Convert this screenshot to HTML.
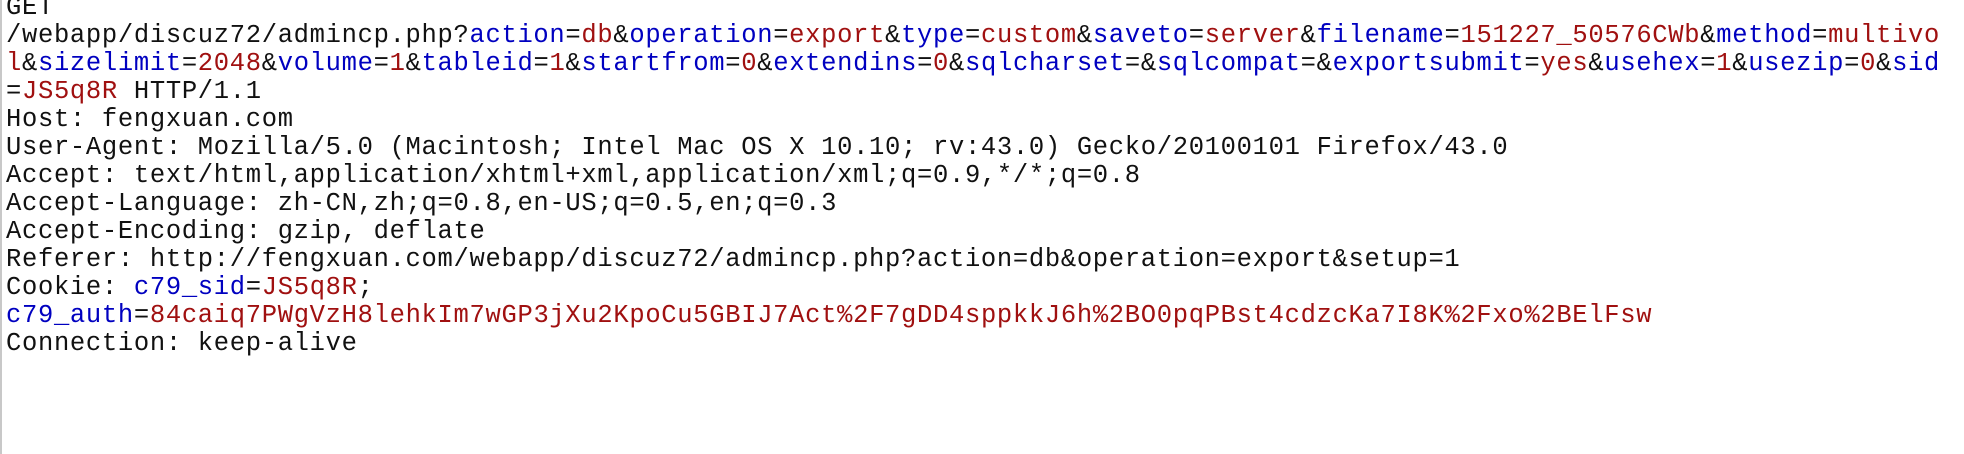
<!DOCTYPE html>
<html><head><meta charset="utf-8"><style>
html,body{margin:0;padding:0;background:#fff;width:1964px;height:454px;overflow:hidden}
body{border-left:2px solid #c8c8c8;box-sizing:border-box}
pre{margin:0;position:absolute;left:6px;top:-6.5px;font-family:"Liberation Mono",monospace;font-size:25.5px;letter-spacing:0.68px;line-height:28.05px;color:#111;white-space:pre}
.k{color:#0000c0}.v{color:#a01010}
</style></head><body><pre>GET
/webapp/discuz72/admincp.php?<span class="k">action</span>=<span class="v">db</span>&amp;<span class="k">operation</span>=<span class="v">export</span>&amp;<span class="k">type</span>=<span class="v">custom</span>&amp;<span class="k">saveto</span>=<span class="v">server</span>&amp;<span class="k">filename</span>=<span class="v">151227_50576CWb</span>&amp;<span class="k">method</span>=<span class="v">multivo</span>
<span class="v">l</span>&amp;<span class="k">sizelimit</span>=<span class="v">2048</span>&amp;<span class="k">volume</span>=<span class="v">1</span>&amp;<span class="k">tableid</span>=<span class="v">1</span>&amp;<span class="k">startfrom</span>=<span class="v">0</span>&amp;<span class="k">extendins</span>=<span class="v">0</span>&amp;<span class="k">sqlcharset</span>=&amp;<span class="k">sqlcompat</span>=&amp;<span class="k">exportsubmit</span>=<span class="v">yes</span>&amp;<span class="k">usehex</span>=<span class="v">1</span>&amp;<span class="k">usezip</span>=<span class="v">0</span>&amp;<span class="k">sid</span>
=<span class="v">JS5q8R</span> HTTP/1.1
Host: fengxuan.com
User-Agent: Mozilla/5.0 (Macintosh; Intel Mac OS X 10.10; rv:43.0) Gecko/20100101 Firefox/43.0
Accept: text/html,application/xhtml+xml,application/xml;q=0.9,*/*;q=0.8
Accept-Language: zh-CN,zh;q=0.8,en-US;q=0.5,en;q=0.3
Accept-Encoding: gzip, deflate
Referer: http://fengxuan.com/webapp/discuz72/admincp.php?action=db&amp;operation=export&amp;setup=1
Cookie: <span class="k">c79_sid</span>=<span class="v">JS5q8R</span>;
<span class="k">c79_auth</span>=<span class="v">84caiq7PWgVzH8lehkIm7wGP3jXu2KpoCu5GBIJ7Act%2F7gDD4sppkkJ6h%2BO0pqPBst4cdzcKa7I8K%2Fxo%2BElFsw</span>
Connection: keep-alive</pre></body></html>
